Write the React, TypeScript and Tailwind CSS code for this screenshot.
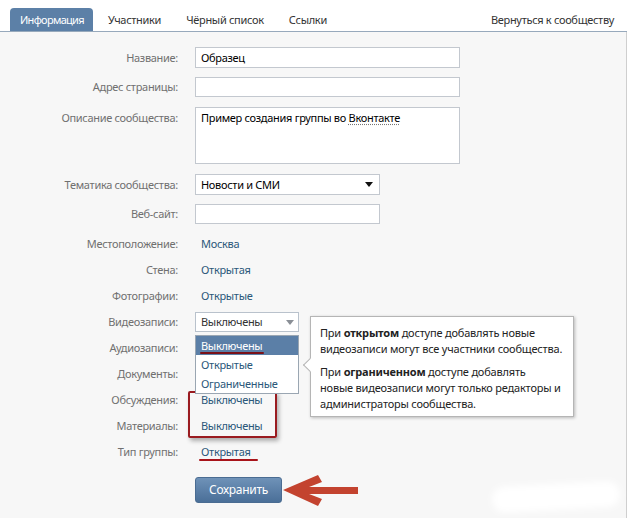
import React from "react";

const Label = ({ children, className = "" }: { children: React.ReactNode; className?: string }) => (
  <div className={`w-[178px] shrink-0 text-right text-[#707070] ${className}`}>{children}</div>
);

const TextRow = ({ label, children }: { label: string; children?: React.ReactNode }) => (
  <div className="flex items-center h-[26px]">
    <Label>{label}</Label>
    <div className="ml-[17px] relative">{children}</div>
  </div>
);

const Value = ({ children }: { children: React.ReactNode }) => (
  <span className="pl-[6px] text-[#2b587a]">{children}</span>
);

export default function App() {
  return (
    <div className="relative w-[630px] h-[518px] bg-white overflow-hidden font-['Noto_Sans',sans-serif] text-[11px] leading-[16px] tracking-[-0.3px] text-[#333]">
      {/* header tabs */}
      <div className="w-[627px] h-[32px] flex items-end pl-[10px] pr-[13px] border-b border-[#97a9bc]">
        <div className="flex items-end gap-[5px]">
          <div className="h-[23px] pl-[10px] pr-[9px] flex items-center rounded-t-[4px] bg-[#5c80a7] text-white tracking-[-0.7px]">Информация</div>
          <div className="h-[23px] px-[10px] flex items-center text-[#333]">Участники</div>
          <div className="h-[23px] px-[10px] flex items-center text-[#333]">Чёрный список</div>
          <div className="h-[23px] px-[10px] flex items-center text-[#333]">Ссылки</div>
        </div>
        <div className="ml-auto h-[23px] flex items-center text-[#333]">Вернуться к сообществу</div>
      </div>

      {/* body */}
      <div className="w-[627px] h-[486px] bg-[#f7f7f7] border-r border-[#cfcfcf] pt-[15px]">
        <div className="flex items-center h-[21px] mb-[9px]">
          <Label>Название:</Label>
          <div className="ml-[17px] w-[265px] h-[21px] bg-white border border-[#c3c8cf] pl-[5px] flex items-center text-black">Образец</div>
        </div>
        <div className="flex items-center h-[20px] mb-[10px]">
          <Label>Адрес страницы:</Label>
          <div className="ml-[17px] w-[265px] h-[20px] bg-white border border-[#c3c8cf]"></div>
        </div>
        <div className="flex items-start h-[57px] mb-[10px]">
          <Label className="pt-[3px]">Описание сообщества:</Label>
          <div className="ml-[17px] w-[265px] h-[57px] bg-white border border-[#c3c8cf] pl-[5px] pt-[2px] text-black">
            Пример создания группы во{" "}
            <span className="underline decoration-dotted decoration-[#777] underline-offset-2">Вконтакте</span>
          </div>
        </div>
        <div className="flex items-center h-[21px] mb-[9px]">
          <Label>Тематика сообщества:</Label>
          <div className="ml-[17px] w-[185px] h-[21px] bg-white border border-[#c3c8cf] pl-[5px] pr-[6px] flex items-center justify-between text-black">
            <span>Новости и СМИ</span>
            <svg width="8" height="5" viewBox="0 0 8 5"><path d="M0 0h8L4 5z" fill="#111" /></svg>
          </div>
        </div>
        <div className="flex items-center h-[20px] mb-[7px]">
          <Label>Веб-сайт:</Label>
          <div className="ml-[17px] w-[185px] h-[20px] bg-white border border-[#c3c8cf]"></div>
        </div>

        <TextRow label="Местоположение:"><Value>Москва</Value></TextRow>
        <TextRow label="Стена:"><Value>Открытая</Value></TextRow>
        <TextRow label="Фотографии:"><Value>Открытые</Value></TextRow>
        <TextRow label="Видеозаписи:">
          <div className="w-[104px] h-[20px] bg-white border border-[#b9c2cc] pl-[5px] pr-[4px] flex items-center justify-between text-[#333]">
            <span>Выключены</span>
            <svg width="8" height="5" viewBox="0 0 8 5"><path d="M0 0h8L4 5z" fill="#8a8f96" /></svg>
          </div>
          {/* dropdown list */}
          <div className="absolute left-0 top-[23px] w-[104px] bg-white border border-[#9aa6b2] z-10">
            <div className="h-[19px] bg-[#5b7fa7] text-white pl-[5px] flex items-center relative">
              Выключены
              <div className="absolute left-[4px] top-[16px] w-[64px] h-[2px] bg-[#7a1118] rounded-full"></div>
            </div>
            <div className="h-[19px] pl-[5px] flex items-center text-[#2b587a]">Открытые</div>
            <div className="h-[19px] pl-[5px] flex items-center text-[#2b587a]">Ограниченные</div>
          </div>
          {/* tooltip */}
          <div className="absolute left-[115px] top-[4px] w-[264px] bg-white border border-[#b5b5b5] shadow-[1px_1px_3px_rgba(0,0,0,0.25)] pl-[9px] pt-[8px] pb-[4px] text-[#222] tracking-[-0.2px] z-10">
            <div className="absolute -left-[6px] top-[43px] w-[10px] h-[10px] bg-white border-l border-b border-[#b5b5b5] rotate-45"></div>
            <p className="whitespace-nowrap">При <b>открытом</b> доступе добавлять новые</p>
            <p className="whitespace-nowrap">видеозаписи могут все участники сообщества.</p>
            <p className="whitespace-nowrap mt-[7px]">При <b>ограниченном</b> доступе добавлять</p>
            <p className="whitespace-nowrap">новые видеозаписи могут только редакторы и</p>
            <p className="whitespace-nowrap">администраторы сообщества.</p>
          </div>
        </TextRow>
        <TextRow label="Аудиозаписи:" />
        <TextRow label="Документы:" />
        <TextRow label="Обсуждения:">
          <Value>Выключены</Value>
          <div className="absolute -left-[7px] top-[-1px] w-[89px] h-[47px] border-2 border-[#9a1b20] rounded-[2px] shadow-[2px_3px_4px_rgba(0,0,0,0.3)]"></div>
        </TextRow>
        <TextRow label="Материалы:"><Value>Выключены</Value></TextRow>
        <TextRow label="Тип группы:">
          <span className="relative pl-[6px] text-[#2b587a]">
            Открытая
            <span className="absolute left-[4px] top-[15px] w-[59px] h-[2px] bg-[#a8141a] rounded-full"></span>
          </span>
        </TextRow>

        <div className="flex mt-[12px]">
          <div className="w-[178px] shrink-0"></div>
          <div className="ml-[17px] relative">
            <div className="w-[87px] h-[26px] rounded-[3px] bg-gradient-to-b from-[#6f92b8] to-[#4a6f98] border border-[#4a6c92] text-white text-[12px] flex items-center justify-center">
              Сохранить
            </div>
            <svg className="absolute left-[87px] top-[-3px]" width="78" height="34" viewBox="0 0 78 34">
              <polygon points="1,16 36,1 40,8 18,16.5 40,25 36,32" fill="#c3432f" />
              <rect x="14" y="13" width="62" height="7" fill="#c3432f" />
            </svg>
          </div>
        </div>
      </div>

      {/* erased watermark smear */}
      <div className="absolute left-[492px] top-[484px] w-[128px] h-[26px] bg-white rounded-full blur-[3px] -rotate-3"></div>
    </div>
  );
}
